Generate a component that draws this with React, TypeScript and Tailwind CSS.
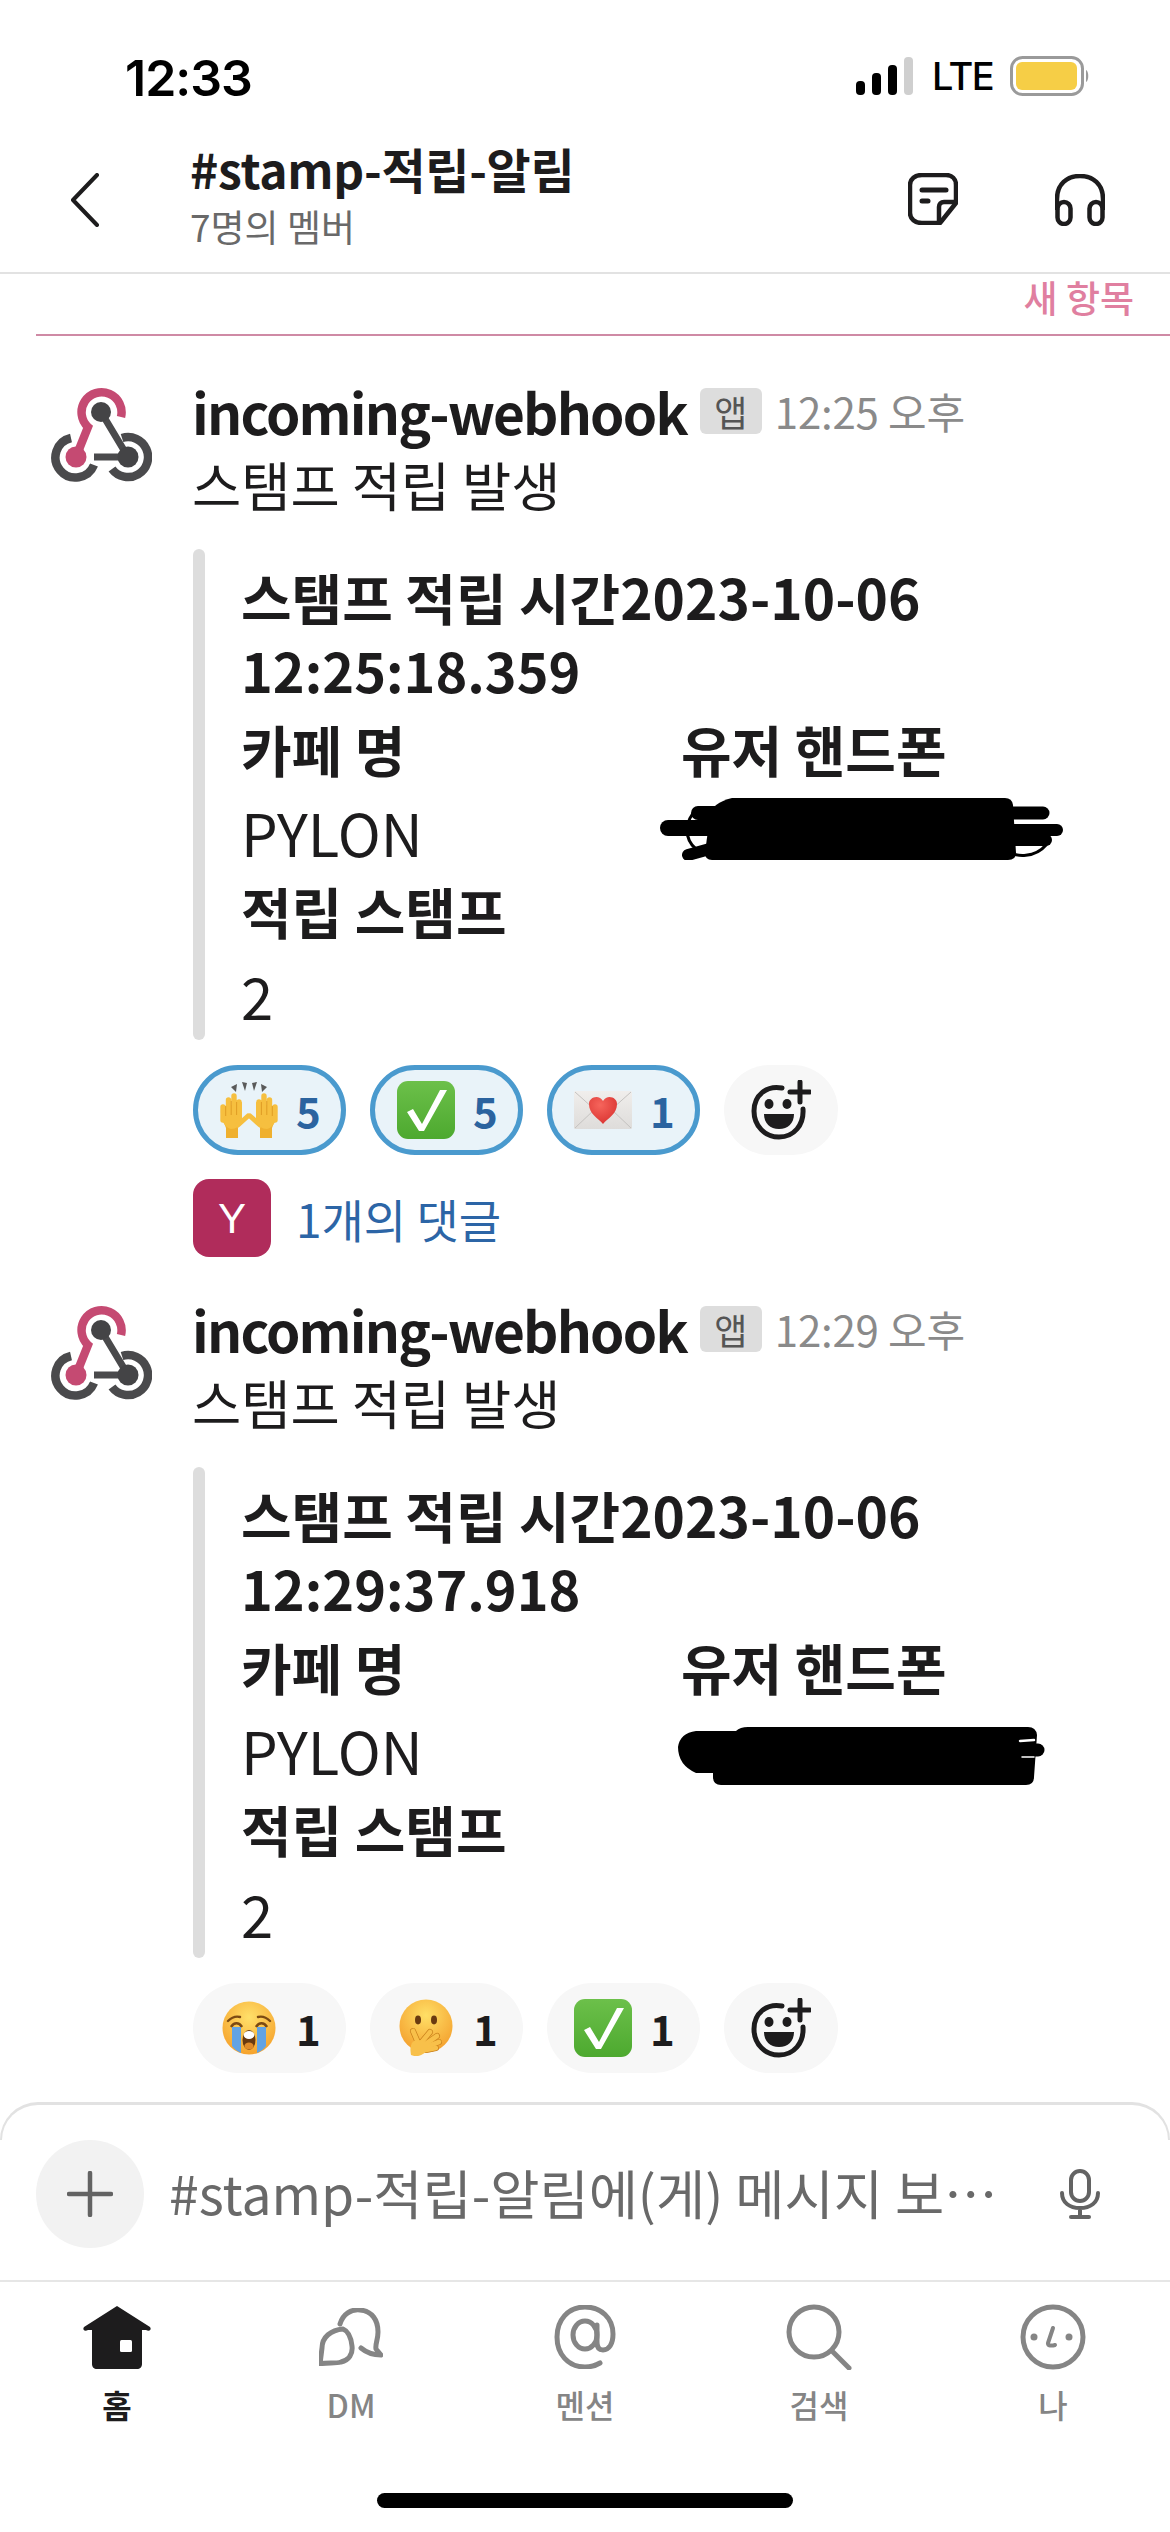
import React from "react";

const KR = "font-['Noto_Sans_CJK_KR','Noto_Sans',sans-serif]";

function WebhookLogo() {
  return (
    <svg viewBox="0 0 102 94" className="w-[102px] h-[94px] shrink-0 mt-[6px]" fill="none">
      <path d="M51 24 L78 69 L44 69" stroke="#4a4a4c" strokeWidth="7" />
      <path d="M71 29 A20 20 0 1 0 38 39 L26 69" stroke="#c54a72" strokeWidth="8.5" />
      <circle cx="51" cy="24" r="10" fill="#444446" />
      <path d="M21 50 A20 20 0 1 0 44 77" stroke="#4a4a4c" strokeWidth="8.5" />
      <path d="M72 50 A20 20 0 1 1 62 81" stroke="#4a4a4c" strokeWidth="8.5" />
      <circle cx="26" cy="69" r="10.5" fill="#c54a72" />
      <circle cx="78" cy="69" r="10.5" fill="#444446" />
    </svg>
  );
}

function HalfHands() {
  return (
    <g>
      <path d="M7 56 V46 L3 36 H22 L19 46 V56 Z" fill="#efb02f" />
      <path d="M2 26 C1 38 6 46 12 47 C17 47 21 44 23 40 L23 20 Z" fill="#f6bf3f" />
      <path d="M19 43 L29 34" stroke="#f6bf3f" strokeWidth="5" strokeLinecap="round" />
      <path d="M4 38 V25 M9.5 36 V18 M15 36 V14 M20 36 V20" stroke="#f6bf3f" strokeWidth="5.4" strokeLinecap="round" />
      <path d="M6.7 34 V24 M12.2 33 V19 M17.6 33 V20" stroke="#d9941e" strokeWidth=".8" />
    </g>
  );
}

function Hands() {
  return (
    <svg viewBox="0 0 60 56" className="w-[60px] h-[56px] shrink-0">
      <path d="M12 5 L18 2 L17 10Z M23 0 L28 1 L26 9Z M33 1 L38 0 L35 9Z M42 2 L48 5 L43 10Z" fill="#5a5a5a" />
      <HalfHands />
      <g transform="translate(60 0) scale(-1 1)">
        <HalfHands />
      </g>
    </svg>
  );
}

function Check({ gid }: { gid: string }) {
  return (
    <svg viewBox="0 0 58 58" className="w-[58px] h-[58px] shrink-0">
      <defs>
        <linearGradient id={gid} x1="0" y1="0" x2="0" y2="1">
          <stop offset="0" stopColor="#6cc04a" />
          <stop offset="1" stopColor="#4da92f" />
        </linearGradient>
      </defs>
      <rect width="58" height="58" rx="11" fill={`url(#${gid})`} />
      <path d="M10 31 L16 28 L25 43 L43 9 L50 9 L27 50 L22 50 Z" fill="#fff" />
    </svg>
  );
}

function Mail() {
  return (
    <svg viewBox="0 0 58 38" className="w-[58px] h-[38px] shrink-0">
      <defs>
        <linearGradient id="ml" x1="0" y1="0" x2="0" y2="1">
          <stop offset="0" stopColor="#f0eeec" />
          <stop offset="1" stopColor="#dedcda" />
        </linearGradient>
        <radialGradient id="hrt" cx=".4" cy=".3" r=".8">
          <stop offset="0" stopColor="#f6655c" />
          <stop offset="1" stopColor="#d8302e" />
        </radialGradient>
      </defs>
      <rect width="58" height="38" rx="1.5" fill="url(#ml)" />
      <path d="M1 1 L29 26 L57 1 M1 37 L21 18 M57 37 L37 18" stroke="#c4c2c0" strokeWidth="1" fill="none" />
      <path d="M29 33 C24 27 15 23 15 13 C15 6 25 3 29 10 C33 3 43 6 43 13 C43 23 34 27 29 33 Z" fill="url(#hrt)" />
    </svg>
  );
}

function Crying() {
  return (
    <svg viewBox="0 0 54 54" className="w-[54px] h-[54px] shrink-0">
      <defs>
        <radialGradient id="cry" cx=".5" cy=".3" r=".75">
          <stop offset="0" stopColor="#ffe06a" />
          <stop offset="1" stopColor="#f59e28" />
        </radialGradient>
      </defs>
      <circle cx="27" cy="27" r="26.5" fill="url(#cry)" />
      <path d="M6 20 C10 16 14 15 18 16 M48 20 C44 16 40 15 36 16" stroke="#7c4a12" strokeWidth="2.4" fill="none" strokeLinecap="round" />
      <path d="M9 26 C12 21 17 21 20 26 M34 26 C37 21 42 21 45 26" stroke="#7c4a12" strokeWidth="2.6" fill="none" />
      <path d="M10 26 H19 V52 C15 50 12 48 10 45Z M35 26 H44 V45 C42 48 39 50 35 52Z" fill="#62a3e3" />
      <ellipse cx="27" cy="39" rx="6.5" ry="10" fill="#6a3a10" />
      <ellipse cx="27" cy="34" rx="5.4" ry="4" fill="#fff" />
      <ellipse cx="27" cy="45" rx="4.6" ry="3.6" fill="#e08a28" />
    </svg>
  );
}

function HandMouth() {
  const fingers = ["M20 46 L14 32", "M22 44 L31 33", "M25 46 L38 37", "M27 48 L40 43", "M27 51 L37 49"];
  return (
    <svg viewBox="0 0 54 58" className="w-[54px] h-[58px] shrink-0" fill="none" strokeLinecap="round">
      <defs>
        <radialGradient id="hm" cx=".5" cy=".3" r=".75">
          <stop offset="0" stopColor="#ffdf66" />
          <stop offset="1" stopColor="#f39c2a" />
        </radialGradient>
      </defs>
      <circle cx="27" cy="27" r="26.5" fill="url(#hm)" />
      <ellipse cx="19" cy="21" rx="3" ry="4.4" fill="#6a3a10" />
      <ellipse cx="35" cy="21" rx="3" ry="4.4" fill="#6a3a10" />
      {fingers.map((d, i) => (
        <path key={i} d={d} stroke="#c9801c" strokeWidth="6" />
      ))}
      {fingers.map((d, i) => (
        <path key={i} d={d} stroke="#f8c04a" strokeWidth="4.6" />
      ))}
      <path d="M12 56 C11 50 11 45 15 42 C20 39 27 43 29 48 C29 52 24 56 19 57 C16 57 14 57 12 56Z" fill="#f8c04a" />
    </svg>
  );
}

function AddReaction() {
  return (
    <svg viewBox="0 0 60 60" className="w-[60px] h-[60px]" fill="none">
      <path d="M31 8 C16 5 3 15 3 31 C3 46 14 57 28 57 C43 57 53 45 52 29" stroke="#1d1c1d" strokeWidth="5" strokeLinecap="round" />
      <ellipse cx="18" cy="24" rx="4.5" ry="5" fill="#1d1c1d" />
      <ellipse cx="36" cy="24" rx="4.5" ry="5" fill="#1d1c1d" />
      <path d="M13 34 H43 C43 43 37 49 28 49 C19 49 13 43 13 34Z" fill="#1d1c1d" />
      <path d="M49 2 V22 M39 12 H59" stroke="#1d1c1d" strokeWidth="5" strokeLinecap="round" />
    </svg>
  );
}

function Pill({ icon, n, on }: { icon: React.ReactNode; n: string; on?: boolean }) {
  return (
    <div
      className={
        "w-[153px] h-[90px] rounded-[45px] flex items-center pl-[26px] " +
        (on ? "bg-[#e9f3f9] outline-[5px] outline-[#4a9ace] -outline-offset-[5px]" : "bg-[#f7f7f7]")
      }
    >
      <div className="w-[60px] h-[60px] flex items-center justify-center shrink-0">{icon}</div>
      <span className={"ml-[17px] text-[42px] font-bold leading-none " + (on ? "text-[#2b639f]" : "text-[#1d1c1d]")}>{n}</span>
    </div>
  );
}

function Message(props: {
  time: string;
  stamp: string;
  reactions: React.ReactNode;
  thread?: boolean;
  scribble: React.ReactNode;
  top: string;
}) {
  return (
    <div className={"flex pl-[50px] " + props.top}>
      <div className="w-[142px] shrink-0">
        <WebhookLogo />
      </div>
      <div className="flex flex-col w-[950px]">
        <div className="flex items-center h-[66px] pb-[8px]">
          <span className="text-[55px] font-bold text-[#1d1c1d] leading-none tracking-[-1.8px]">incoming-webhook</span>
          <span className="ml-[13px] w-[62px] h-[46px] bg-[#dddddd] rounded-[6px] flex items-center justify-center text-[36px] text-[#555] leading-none">앱</span>
          <span className="ml-[13px] text-[42px] text-[#8a8a8a] leading-none tracking-[-0.2px]">{props.time}</span>
        </div>
        <div className="h-[66px] mt-[3px] text-[53.5px] text-[#1d1c1d] leading-[66px] whitespace-nowrap">스탬프 적립 발생</div>
        <div className="flex mt-[32px] h-[491px] ml-[1px]">
          <div className="w-[12px] bg-[#dddddd] rounded-[6px] shrink-0" />
          <div className="ml-[36px] pt-[11px] text-[#1d1c1d] text-[55px]">
            <div className="font-bold leading-[73px] w-[720px] whitespace-nowrap">
              스탬프 적립 시간2023-10-06
              <br />
              <span className="text-[54px]">{props.stamp}</span>
            </div>
            <div className="flex h-[84px] items-center font-bold leading-none">
              <div className="w-[440px]">카페 명</div>
              <div>유저 핸드폰</div>
            </div>
            <div className="flex h-[84px] items-center leading-none">
              <div className="w-[440px] shrink-0 text-[58px]">PYLON</div>
              {props.scribble}
            </div>
            <div className="h-[72px] flex items-center font-bold leading-none">적립 스탬프</div>
            <div className="h-[72px] mt-[13px] flex items-center leading-none text-[58px]">2</div>
          </div>
        </div>
        <div className="flex gap-[24px] mt-[25px] ml-[1px]">
          {props.reactions}
          <div className="w-[114px] h-[90px] rounded-[45px] bg-[#f7f7f7] flex items-center justify-center">
            <AddReaction />
          </div>
        </div>
        {props.thread && (
          <div className="flex items-center mt-[24px] h-[78px] ml-[1px]">
            <div className="w-[78px] h-[78px] rounded-[16px] bg-[#b02c5b] flex items-center justify-center text-white text-[42px] font-['Liberation_Sans',sans-serif]">Y</div>
            <span className="ml-[25px] text-[46px] text-[#2c65a6] leading-none">1개의 댓글</span>
          </div>
        )}
      </div>
    </div>
  );
}

function Tab({ icon, label, active }: { icon: React.ReactNode; label: string; active?: boolean }) {
  return (
    <div className="flex flex-col items-center">
      <div className="h-[70px] flex items-center justify-center">{icon}</div>
      <div className={"mt-[10px] text-[32px] leading-[44px] " + (active ? "font-bold text-[#1d1c1d]" : "font-medium text-[#858585]")}>{label}</div>
    </div>
  );
}

export default function App() {
  return (
    <div className={"w-[1170px] h-[2532px] bg-white flex flex-col overflow-hidden " + KR}>
      <div className="h-[141px] flex items-start justify-between pl-[125px] pr-[80px] pt-[50px] shrink-0">
        <span className="font-['Inter',sans-serif] font-semibold text-[50px] leading-[56px] text-black tracking-[-1px]">12:33</span>
        <div className="flex items-center mt-[6px]">
          <svg viewBox="0 0 58 38" className="w-[58px] h-[38px]">
            <rect x="0" y="24" width="9" height="14" rx="4" fill="#000" />
            <rect x="16" y="16" width="9" height="22" rx="4" fill="#000" />
            <rect x="32" y="8" width="9" height="30" rx="4" fill="#000" />
            <rect x="48" y="0" width="9" height="38" rx="4" fill="#cfcfcf" />
          </svg>
          <span className="ml-[18px] font-['Inter',sans-serif] font-medium text-[38px] leading-none text-black tracking-[-1.5px] w-[60px]">LTE</span>
          <svg viewBox="0 0 80 40" className="w-[80px] h-[40px] ml-[18px]">
            <rect x="1.5" y="1.5" width="71" height="37" rx="11" fill="none" stroke="#9a9a9a" strokeWidth="3" />
            <rect x="6" y="6" width="61" height="28" rx="6" fill="#f6ce46" />
            <path d="M76 14 C79 15 79 25 76 26Z" fill="#9a9a9a" />
          </svg>
        </div>
      </div>

      <div className="h-[133px] flex items-start border-b-2 border-[#e2e2e2] shrink-0 relative">
        <svg viewBox="0 0 30 54" className="w-[30px] h-[54px] ml-[70px] mt-[32px]" fill="none">
          <path d="M27 2 L3 27 L27 52" stroke="#1d1c1d" strokeWidth="4" strokeLinejoin="round" strokeLinecap="round" />
        </svg>
        <div className="ml-[90px] flex flex-col">
          <span className="text-[48px] font-bold text-[#1d1c1d] leading-[56px] mt-[-1px] tracking-[-0.3px] whitespace-nowrap">#stamp-적립-알림</span>
          <span className="text-[37px] text-[#696969] leading-[44px] mt-[8px]">7명의 멤버</span>
        </div>
        <svg viewBox="0 0 50 52" className="w-[50px] h-[52px] absolute left-[908px] top-[32px]" fill="none" stroke="#1d1c1d" strokeWidth="4.5" strokeLinejoin="round">
          <path d="M14 2 H38 C44 2 48 6 48 12 V30 L32 50 H14 C7 50 2 46 2 40 V12 C2 6 7 2 14 2Z" />
          <path d="M48 29 H36 C33 29 31 31 31 34 V50" />
          <path d="M14 17 H38" strokeLinecap="round" strokeWidth="5" />
          <path d="M14 28 H20" strokeLinecap="round" strokeWidth="5" />
        </svg>
        <svg viewBox="0 0 50 52" className="w-[50px] h-[52px] absolute left-[1055px] top-[33px]" fill="none" stroke="#1d1c1d" strokeWidth="4.5">
          <path d="M2 36 V25 C2 10 12 2 25 2 C38 2 48 10 48 25 V36" />
          <rect x="2.5" y="28" width="13" height="22" rx="6.5" />
          <rect x="34.5" y="28" width="13" height="22" rx="6.5" />
        </svg>
      </div>

      <div className="h-[62px] ml-[36px] border-b-2 border-[#cf8aa5] flex justify-end pr-[36px] shrink-0">
        <span className="text-[37px] font-medium text-[#e07fa0] leading-[44px] mt-[1px] h-[44px]">새 항목</span>
      </div>

      <div className="h-[1766px] shrink-0 overflow-hidden">
        <Message
          top="pt-[46px]"
          time="12:25 오후"
          stamp="12:25:18.359"
          thread
          scribble={
            <svg viewBox="0 0 404 65" className="w-[404px] h-[65px] ml-[-21px] mt-[-9px] shrink-0" fill="none" stroke="#000" strokeLinecap="round">
              <path d="M72 3 H345 Q352 3 353 10 L356 58 Q356 65 348 65 H52 Q45 65 45 58 L50 20 Q52 8 72 3Z" fill="#000" stroke="none" />
              <path d="M8 33 H100" strokeWidth="16" />
              <path d="M38 18 H100" strokeWidth="14" />
              <path d="M28 60 L64 50" strokeWidth="12" />
              <path d="M340 18 H383" strokeWidth="13" />
              <path d="M340 35 H397" strokeWidth="12" />
              <path d="M340 45 H386" strokeWidth="12" />
              <path d="M37 14 C24 26 24 44 36 54" strokeWidth="3" />
              <path d="M345 54 C356 64 376 62 386 50" strokeWidth="3" />
            </svg>
          }
          reactions={
            <>
              <Pill on icon={<Hands />} n="5" />
              <Pill on icon={<Check gid="c1" />} n="5" />
              <Pill on icon={<Mail />} n="1" />
            </>
          }
        />
        <Message
          top="pt-[43px]"
          time="12:29 오후"
          stamp="12:29:37.918"
          scribble={
            <svg viewBox="0 0 370 59" className="w-[370px] h-[59px] ml-[-5px] mt-[13px] shrink-0" fill="none" stroke="#000" strokeLinecap="round">
              <path d="M72 0 H352 Q360 0 361 8 L358 50 Q358 58 350 58 H45 Q37 58 37 50 V46 H20 Q2 38 2 20 Q4 6 20 4 H60 Q64 0 72 0Z" fill="#000" stroke="none" />
              <path d="M340 23 H362" strokeWidth="13" />
              <path d="M344 14 L358 13" stroke="#fff" strokeWidth="2.5" />
              <path d="M346 30 L358 30" stroke="#fff" strokeWidth="1.5" />
            </svg>
          }
          reactions={
            <>
              <Pill icon={<Crying />} n="1" />
              <Pill icon={<HandMouth />} n="1" />
              <Pill icon={<Check gid="c2" />} n="1" />
            </>
          }
        />
      </div>

      <div className="h-[38px] shrink-0 rounded-t-[44px] border-t-[3px] border-x-[2px] border-b-0 border-[#e2e2e2]" />
      <div className="h-[142px] shrink-0 flex items-start pl-[36px] border-b-2 border-[#e6e6e6]">
        <div className="w-[108px] h-[108px] rounded-full bg-[#f2f2f2] flex items-center justify-center shrink-0">
          <svg viewBox="0 0 46 46" className="w-[46px] h-[46px]" fill="none" stroke="#636363" strokeWidth="4.5" strokeLinecap="round">
            <path d="M23 2 V44 M2 23 H44" />
          </svg>
        </div>
        <span className="ml-[25px] text-[53.5px] leading-[104px] text-[#696969] whitespace-nowrap w-[831px]">#stamp-적립-알림에(게) 메시지 보…</span>
        <svg viewBox="0 0 40 50" className="w-[40px] h-[50px] ml-[60px] mt-[29px] shrink-0" fill="none" stroke="#636363" strokeWidth="4" strokeLinecap="round">
          <rect x="11" y="2" width="18" height="30" rx="9" />
          <path d="M2 24 C2 34 10 39 20 39 C30 39 38 34 38 24 M20 39 V48 M11 48 H29" />
        </svg>
      </div>

      <div className="grid grid-cols-5 pt-[20px] shrink-0">
        <Tab
          active
          label="홈"
          icon={
            <svg viewBox="0 0 68 63" className="w-[68px] h-[63px]">
              <path d="M34 0 L67 21 C69 24 66 26 63 24 L59 24 V58 C59 61 57 63 54 63 H14 C11 63 9 61 9 58 V24 L5 24 C2 26 -1 24 1 21 Z" fill="#1d1c1d" />
              <rect x="37" y="34" width="12" height="12" rx="1.5" fill="#fff" />
            </svg>
          }
        />
        <Tab
          label="DM"
          icon={
            <svg viewBox="0 0 64 58" className="w-[64px] h-[58px]" fill="none" stroke="#858585" strokeWidth="5" strokeLinejoin="round" strokeLinecap="round">
              <path d="M21 16 C24 6 32 1 41 2 C53 3 59 12 59 24 C59 32 56 36 57 41 L62 47 C55 47 48 45 42 40" />
              <path d="M24 21 C12 22 3 29 3 40 L1 56 C8 54 16 56 22 54 C30 52 34 46 33 38 C32 29 29 23 24 21Z" />
            </svg>
          }
        />
        <Tab
          label="멘션"
          icon={
            <svg viewBox="0 0 62 64" className="w-[62px] h-[64px]" fill="none" stroke="#858585" strokeWidth="5" strokeLinecap="round">
              <path d="M46 58 C41 61 36 62 31 62 C14 62 3 49 3 32 C3 15 14 2 31 2 C47 2 59 13 59 29 C59 39 55 45 49 45 C44 45 43 41 43 37 V20" />
              <ellipse cx="31" cy="30" rx="12" ry="14" />
            </svg>
          }
        />
        <Tab
          label="검색"
          icon={
            <svg viewBox="0 0 66 66" className="w-[66px] h-[66px]" fill="none" stroke="#858585" strokeWidth="5" strokeLinecap="round">
              <circle cx="28" cy="28" r="25" />
              <path d="M46 47 L63 64" />
            </svg>
          }
        />
        <Tab
          label="나"
          icon={
            <svg viewBox="0 0 66 66" className="w-[66px] h-[66px]" fill="none" stroke="#858585" strokeWidth="5" strokeLinecap="round">
              <circle cx="33" cy="33" r="30" />
              <circle cx="14" cy="33" r="3.5" fill="#858585" stroke="none" />
              <circle cx="49" cy="33" r="3.5" fill="#858585" stroke="none" />
              <path d="M33 24 L28 39 C27 42 32 42 35 41" strokeWidth="4" />
            </svg>
          }
        />
      </div>
      <div className="mt-auto mb-[24px] mx-auto w-[416px] h-[15px] rounded-full bg-black shrink-0" />
    </div>
  );
}
